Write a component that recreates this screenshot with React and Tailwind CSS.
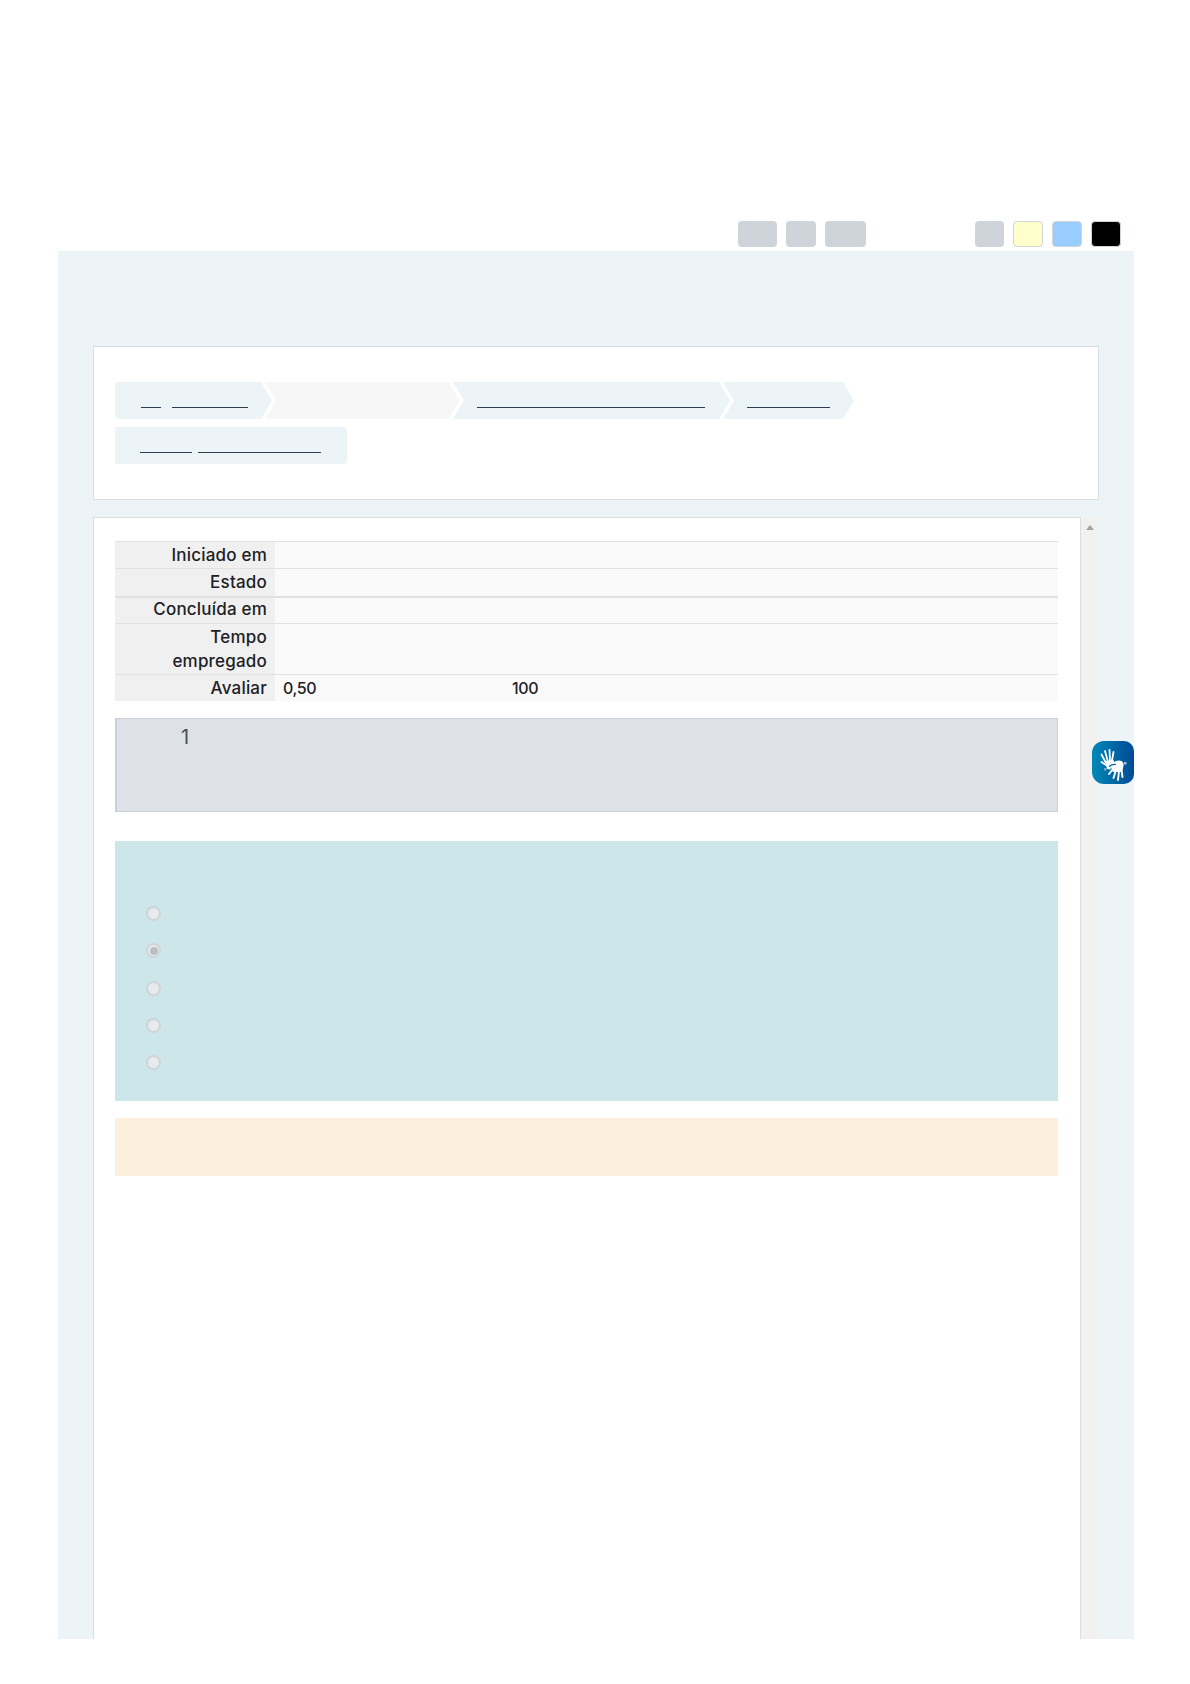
import React from "react";

const rows = [
    { label: "Iniciado em", cls: "h-[27px] border-t border-[#dee2e6]", text: "pt-px" },
    { label: "Estado", cls: "h-[28px] border-t border-[#dee2e6]", text: "pt-px" },
    { label: "Concluída em", cls: "h-[27px] border-t-2 border-[#dee2e6]", text: "-mt-px" },
    { label: "Tempo", label2: "empregado", cls: "h-[51px] border-t border-[#dee2e6]", text: "pt-px" },
];

function Line({ w, ml = 0 }) {
    return <span className="block h-px bg-[#2c3e50]" style={{ width: w, marginLeft: ml }}></span>;
}

function HandsIcon() {
    return (
        <svg viewBox="0 0 42 42" className="w-[42px] h-[42px]" fill="#fff">
            <g stroke="#fff" strokeLinecap="round" fill="none">
                <path d="M13.5 20 L9.5 12.5" strokeWidth="1.8" />
                <path d="M15.5 18 L13 9" strokeWidth="1.8" />
                <path d="M18 18 L17.5 8" strokeWidth="1.8" />
                <path d="M20 18.5 L21.5 10" strokeWidth="1.8" />
                <path d="M14 23 L9.5 20" strokeWidth="1.8" />
            </g>
            <path d="M13 19 L21 17.5 L23 21 L19 23.5 L18.5 27.5 L15 27 Z" />
            <g stroke="#fff" strokeLinecap="round" fill="none">
                <path d="M21 27 L17 32" strokeWidth="1.9" />
                <path d="M24 28 L21.5 36" strokeWidth="1.9" />
                <path d="M27 29 L26 38" strokeWidth="1.9" />
                <path d="M29.5 28 L30.5 35" strokeWidth="1.9" />
            </g>
            <path d="M18.5 24 Q21 19 27 18.5 Q32 18.5 31.5 24 L30 30 L21 30 Z" />
            <path d="M17 24.5 Q20 22 24 22.5" stroke="#0a64a4" strokeWidth="1.2" fill="none" />
            <rect x="32" y="20" width="2.5" height="2.5" fill="#9fc3dc" />
            <rect x="12" y="26" width="2.5" height="2.5" fill="#7fa9c9" />
        </svg>
    );
}

export default function App() {
    return (
        <div className="h-[1684px] bg-white overflow-hidden font-['Inter',sans-serif] text-[#1d2125]">
            <div className="pt-[221px] pl-[738px] flex h-[247px]">
                <div className="w-[39px] h-[26px] rounded bg-[#ced4da]"></div>
                <div className="w-[30px] h-[26px] rounded bg-[#ced4da] ml-[9px]"></div>
                <div className="w-[41px] h-[26px] rounded bg-[#ced4da] ml-[9px]"></div>
                <div className="w-[29px] h-[26px] rounded bg-[#ced4da] ml-[109px]"></div>
                <div className="w-[30px] h-[26px] rounded bg-[#ffffcc] border border-[#ced4da] ml-[9px]"></div>
                <div className="w-[30px] h-[26px] rounded bg-[#99ccff] border border-[#ced4da] ml-[9px]"></div>
                <div className="w-[30px] h-[26px] rounded bg-black border border-[#ced4da] ml-[9px]"></div>
            </div>

            <div className="relative mt-[4px] ml-[58px] w-[1076px] h-[1388px] bg-[#ecf4f8] pt-[95px] pl-[35px] overflow-hidden">
                <div className="w-[1006px] h-[154px] bg-white border border-[#d9dee3] pt-[35px] pl-[21px]">
                    <div className="flex h-[37px]">
                        <div className="w-[157px] h-[37px] bg-[#ecf4f8] rounded-l pt-[25px] pl-[26px] flex [clip-path:polygon(0_0,146px_0,100%_50%,146px_100%,0_100%)]">
                            <Line w={20} />
                            <Line w={76} ml={11} />
                        </div>
                        <div className="w-[194px] h-[37px] bg-[#f7f7f7] -ml-[7px] [clip-path:polygon(0_0,184px_0,100%_50%,184px_100%,0_100%,11px_50%)]"></div>
                        <div className="w-[277px] h-[37px] bg-[#ecf4f8] -ml-[6px] pt-[25px] pl-[24px] [clip-path:polygon(0_0,266px_0,100%_50%,266px_100%,0_100%,11px_50%)]">
                            <Line w={228} />
                        </div>
                        <div className="w-[131px] h-[37px] bg-[#ecf4f8] -ml-[7px] pt-[25px] pl-[24px] [clip-path:polygon(0_0,120px_0,100%_50%,120px_100%,0_100%,11px_50%)]">
                            <Line w={83} />
                        </div>
                    </div>
                    <div className="flex mt-[8px] w-[232px] h-[37px] bg-[#ecf4f8] rounded-r pt-[25px] pl-[25px]">
                        <Line w={52} />
                        <Line w={123} ml={6} />
                    </div>
                </div>

                <div className="flex mt-[17px] h-[1140px]">
                    <div className="w-[988px] bg-white border border-[#d9dee3] pt-[23px] pl-[21px]">
                        <div className="w-[943px] text-[17px] leading-[24px] font-medium tracking-[0.2px]">
                            {rows.map((r) => (
                                <div key={r.label} className={`flex ${r.cls}`}>
                                    <div className="w-[160px] bg-[#f0f0f0] px-2 text-right">
                                        <div className={r.text}>{r.label}</div>
                                        {r.label2 && <div>{r.label2}</div>}
                                    </div>
                                    <div className="flex-1 bg-[#fafafa]"></div>
                                </div>
                            ))}
                            <div className="flex h-[27px] border-t border-[#dee2e6]">
                                <div className="w-[160px] bg-[#f0f0f0] px-2 pt-px text-right">Avaliar</div>
                                <div className="flex-1 bg-[#fafafa] pl-2 pt-px flex text-[16px] tracking-[-0.4px]">
                                    <span className="w-[229px]">0,50</span>
                                    <span>100</span>
                                </div>
                            </div>
                        </div>

                        <div className="mt-[17px] w-[943px] h-[94px] bg-[#dee2e6] border border-[#cad0d7] border-l-2 pl-[64px] pt-[3px] text-[20px] leading-[30px] text-[#495057]">
                            1
                        </div>

                        <div className="mt-[29px] w-[943px] h-[260px] bg-[#cce6ea] pt-[65px] pl-[31px]">
                            {[0, 1, 2, 3, 4].map((i) => (
                                <div key={i} className={`w-[15px] h-[15px] rounded-full bg-[#e6eced] border-2 border-[#cfd4d6] flex items-center justify-center ${i === 0 ? "" : i === 2 ? "mt-[23px]" : "mt-[22px]"}`}>
                                    {i === 1 && <div className="w-2 h-2 rounded-full bg-[#b9bfc2]"></div>}
                                </div>
                            ))}
                        </div>

                        <div className="mt-[17px] w-[943px] h-[58px] bg-[#fcefdc]"></div>
                    </div>
                    <div className="w-[18px] bg-[#f1f1f1] flex justify-center pt-[8px]">
                        <div className="w-0 h-0 border-x-[4px] border-x-transparent border-b-[5px] border-b-[#a3a3a3]"></div>
                    </div>
                </div>

                <div className="absolute right-0 top-[490px] w-[42px] h-[43px] rounded-l-[12px] rounded-r-[10px] bg-gradient-to-r from-[#0088b8] to-[#004a94] flex items-center justify-center">
                    <HandsIcon />
                </div>
            </div>
        </div>
    );
}
